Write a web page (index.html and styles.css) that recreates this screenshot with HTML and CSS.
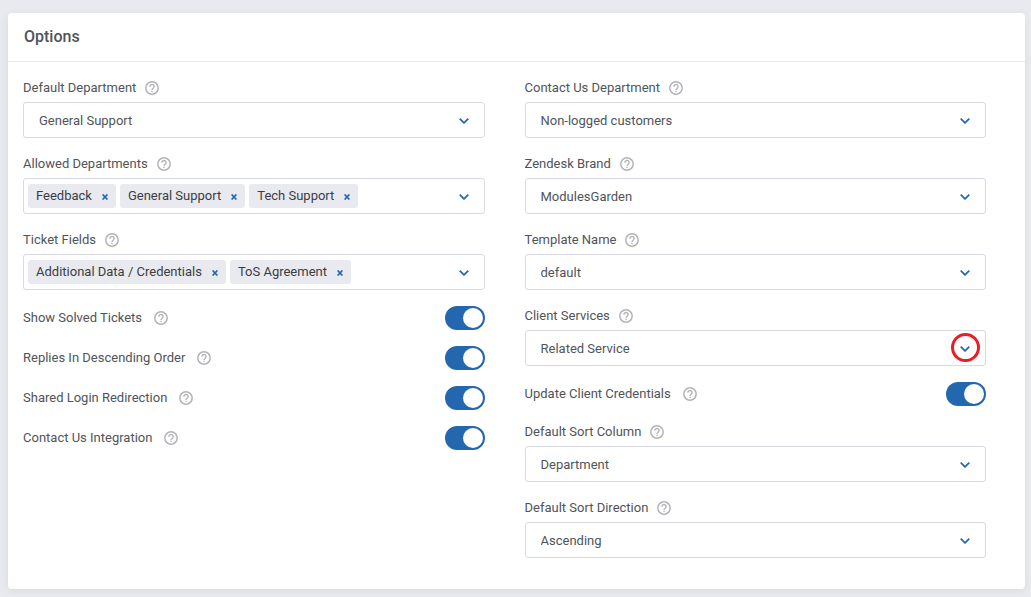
FILE: index.html
```html
<!DOCTYPE html>
<html lang="en">
<head>
<meta charset="utf-8">
<meta name="viewport" content="width=device-width, initial-scale=1">
<title>Options</title>
<link rel="stylesheet" href="styles.css">
</head>
<body>
<svg class="sprite" aria-hidden="true">
  <symbol id="help" viewBox="0 0 14 14"><circle cx="7" cy="7" r="6.200" fill="none" stroke="currentColor" stroke-width="1.500"/><path d="M4.900 5.700a2.100 2.100 0 1 1 3.300 1.600C7.400 7.900 7 8.100 7 9" fill="none" stroke="currentColor" stroke-width="1.400"/><path d="M6.300 9.800h1.400v1.300H6.300z" fill="currentColor"/></symbol>
  <symbol id="chevron" viewBox="0 0 10 6"><path d="M.7.7 5 4.900 9.300.7" fill="none" stroke="currentColor" stroke-width="1.700"/></symbol>
  <symbol id="cross" viewBox="0 0 6 6"><path d="M.6.4 5.400 5.600M5.400.4.6 5.600" fill="none" stroke="currentColor" stroke-width="1.600"/></symbol>
</svg>
<main class="card">
  <header class="card-header"><h1 class="card-title">Options</h1></header>
  <form class="columns">
    <div class="column">
      <div class="field">
        <div class="caption"><label for="default-department">Default Department</label><svg class="help"><use href="#help"/></svg></div>
        <div class="control"><select class="select" id="default-department"><option>General Support</option></select><svg class="chevron"><use href="#chevron"/></svg></div>
      </div>
      <div class="field">
        <div class="caption"><span id="allowed-departments">Allowed Departments</span><svg class="help"><use href="#help"/></svg></div>
        <div class="control tags" role="group" aria-labelledby="allowed-departments">
          <span class="tag">Feedback<button class="remove" type="button" aria-label="Remove Feedback"><svg class="cross"><use href="#cross"/></svg></button></span>
          <span class="tag">General Support<button class="remove" type="button" aria-label="Remove General Support"><svg class="cross"><use href="#cross"/></svg></button></span>
          <span class="tag">Tech Support<button class="remove" type="button" aria-label="Remove Tech Support"><svg class="cross"><use href="#cross"/></svg></button></span>
          <button class="open" type="button" aria-label="Show departments"><svg class="chevron-icon"><use href="#chevron"/></svg></button>
        </div>
      </div>
      <div class="field">
        <div class="caption"><span id="ticket-fields">Ticket Fields</span><svg class="help"><use href="#help"/></svg></div>
        <div class="control tags" role="group" aria-labelledby="ticket-fields">
          <span class="tag">Additional Data / Credentials<button class="remove" type="button" aria-label="Remove Additional Data / Credentials"><svg class="cross"><use href="#cross"/></svg></button></span>
          <span class="tag">ToS Agreement<button class="remove" type="button" aria-label="Remove ToS Agreement"><svg class="cross"><use href="#cross"/></svg></button></span>
          <button class="open" type="button" aria-label="Show ticket fields"><svg class="chevron-icon"><use href="#chevron"/></svg></button>
        </div>
      </div>
      <div class="switch-row"><label for="solved">Show Solved Tickets</label><svg class="help"><use href="#help"/></svg><input class="switch" type="checkbox" id="solved" checked></div>
      <div class="switch-row"><label for="descending">Replies In Descending Order</label><svg class="help"><use href="#help"/></svg><input class="switch" type="checkbox" id="descending" checked></div>
      <div class="switch-row"><label for="shared">Shared Login Redirection</label><svg class="help"><use href="#help"/></svg><input class="switch" type="checkbox" id="shared" checked></div>
      <div class="switch-row"><label for="contact">Contact Us Integration</label><svg class="help"><use href="#help"/></svg><input class="switch" type="checkbox" id="contact" checked></div>
    </div>
    <div class="column">
      <div class="field">
        <div class="caption"><label for="contact-department">Contact Us Department</label><svg class="help"><use href="#help"/></svg></div>
        <div class="control"><select class="select" id="contact-department"><option>Non-logged customers</option></select><svg class="chevron"><use href="#chevron"/></svg></div>
      </div>
      <div class="field">
        <div class="caption"><label for="brand">Zendesk Brand</label><svg class="help"><use href="#help"/></svg></div>
        <div class="control"><select class="select" id="brand"><option>ModulesGarden</option></select><svg class="chevron"><use href="#chevron"/></svg></div>
      </div>
      <div class="field">
        <div class="caption"><label for="template">Template Name</label><svg class="help"><use href="#help"/></svg></div>
        <div class="control"><select class="select" id="template"><option>default</option></select><svg class="chevron"><use href="#chevron"/></svg></div>
      </div>
      <div class="field">
        <div class="caption"><label for="services">Client Services</label><svg class="help"><use href="#help"/></svg></div>
        <div class="control"><select class="select" id="services"><option>Related Service</option></select><svg class="chevron"><use href="#chevron"/></svg><span class="ring"></span></div>
      </div>
      <div class="switch-row"><label for="credentials">Update Client Credentials</label><svg class="help"><use href="#help"/></svg><input class="switch" type="checkbox" id="credentials" checked></div>
      <div class="field">
        <div class="caption"><label for="sort-column">Default Sort Column</label><svg class="help"><use href="#help"/></svg></div>
        <div class="control"><select class="select" id="sort-column"><option>Department</option></select><svg class="chevron"><use href="#chevron"/></svg></div>
      </div>
      <div class="field">
        <div class="caption"><label for="sort-direction">Default Sort Direction</label><svg class="help"><use href="#help"/></svg></div>
        <div class="control"><select class="select" id="sort-direction"><option>Ascending</option></select><svg class="chevron"><use href="#chevron"/></svg></div>
      </div>
    </div>
  </form>
</main>
</body>
</html>
```
FILE: styles.css
```css
* { box-sizing: border-box; }
body {
  margin: 0;
  padding: 13px 6px 8px 8px;
  background: #e9eaef;
  color: #505459;
  font: 13px/20px Roboto, "Liberation Sans", sans-serif;
}
.sprite { display: none; }
.card {
  background: #fff;
  border-radius: 4px;
  box-shadow: 0 2px 8px rgba(60, 60, 80, .08);
}
.card-header {
  padding: 12px 16px;
  border-bottom: 1px solid #e9eaef;
}
.card-title {
  margin: 0;
  font-size: 16px;
  font-weight: 500;
  line-height: 24px;
}
.columns {
  display: grid;
  grid-template-columns: 1fr 1fr;
  gap: 40px;
  padding: 16px 39px 31px 15px;
}
.column {
  display: flex;
  flex-direction: column;
  gap: 16px;
  min-width: 0;
}
.field {
  display: flex;
  flex-direction: column;
  gap: 4px;
}
.caption {
  display: flex;
  align-items: center;
  gap: 9px;
}
.help {
  flex: none;
  width: 14px;
  height: 14px;
  color: #b3b4b8;
}
.control { position: relative; }
.select {
  display: block;
  width: 100%;
  height: 36px;
  padding: 2px 40px 0 15px;
  border: 1px solid #d9dae4;
  border-radius: 3px;
  background: #fff;
  color: inherit;
  font: inherit;
  appearance: none;
}
.chevron {
  position: absolute;
  top: 16px;
  right: 16px;
  width: 10px;
  height: 6px;
  color: #2368ae;
  pointer-events: none;
}
.tags {
  display: flex;
  align-items: center;
  gap: 4px;
  min-height: 36px;
  padding: 0 0 0 4px;
  border: 1px solid #d9dae4;
  border-radius: 3px;
}
.tag {
  display: flex;
  align-items: center;
  height: 24px;
  padding-left: 8px;
  border-radius: 3px;
  background: #e9eaef;
  color: #393d45;
  white-space: nowrap;
}
.remove,
.open {
  display: flex;
  align-items: center;
  padding: 0;
  border: 0;
  background: none;
  color: #2368ae;
}
.remove {
  height: 24px;
  padding: 2px 8px 0 10px;
}
.cross {
  width: 6px;
  height: 6px;
}
.open {
  height: 34px;
  margin-left: auto;
  padding: 2px 15px 0;
}
.chevron-icon {
  width: 10px;
  height: 6px;
}
.switch-row {
  display: flex;
  align-items: center;
  gap: 12px;
}
.switch {
  width: 40px;
  height: 24px;
  margin: 0 0 0 auto;
  padding: 2px;
  border-radius: 12px;
  background: #2368ae;
  appearance: none;
}
.switch::before {
  content: "";
  display: block;
  width: 20px;
  height: 20px;
  border-radius: 50%;
  background: #fff;
}
.switch:checked::before { margin-left: auto; }
.switch:not(:checked) { background: #b3b4b8; }
.ring {
  position: absolute;
  top: 3px;
  right: 6px;
  width: 29px;
  height: 29px;
  border: 3px solid #ec1c24;
  border-radius: 50%;
  pointer-events: none;
}
```
